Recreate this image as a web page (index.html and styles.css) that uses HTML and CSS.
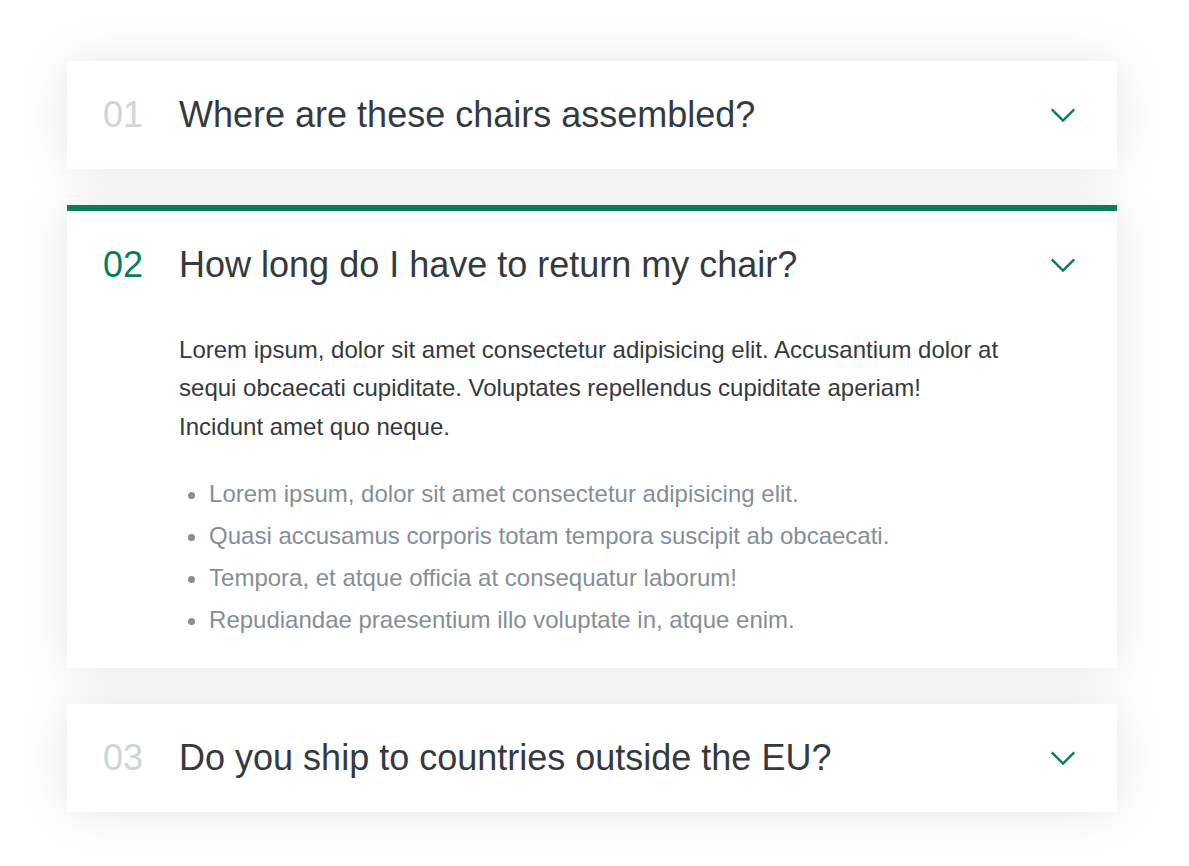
FILE: index.html
```html
<!DOCTYPE html>
<html lang="en">
<head>
<meta charset="utf-8">
<title>Accordion</title>
<link rel="stylesheet" href="styles.css">
</head>
<body>
<div class="accordion">
  <div class="item">
    <p class="number">01</p>
    <p class="title">Where are these chairs assembled?</p>
    <svg class="icon" viewBox="0 0 24 24" fill="none" stroke="currentColor" stroke-width="1.6"><path d="M19.5 8.25l-7.5 7.5-7.5-7.5"/></svg>
  </div>
  <div class="item open">
    <p class="number">02</p>
    <p class="title">How long do I have to return my chair?</p>
    <svg class="icon" viewBox="0 0 24 24" fill="none" stroke="currentColor" stroke-width="1.6"><path d="M19.5 8.25l-7.5 7.5-7.5-7.5"/></svg>
    <div class="content">
      <p>Lorem ipsum, dolor sit amet consectetur adipisicing elit. Accusantium dolor at sequi obcaecati cupiditate. Voluptates repellendus cupiditate aperiam! Incidunt amet quo neque.</p>
      <ul>
        <li>Lorem ipsum, dolor sit amet consectetur adipisicing elit.</li>
        <li>Quasi accusamus corporis totam tempora suscipit ab obcaecati.</li>
        <li>Tempora, et atque officia at consequatur laborum!</li>
        <li>Repudiandae praesentium illo voluptate in, atque enim.</li>
      </ul>
    </div>
  </div>
  <div class="item">
    <p class="number">03</p>
    <p class="title">Do you ship to countries outside the EU?</p>
    <svg class="icon" viewBox="0 0 24 24" fill="none" stroke="currentColor" stroke-width="1.6"><path d="M19.5 8.25l-7.5 7.5-7.5-7.5"/></svg>
  </div>
</div>
</body>
</html>
```
FILE: styles.css
```css
* { margin: 0; padding: 0; box-sizing: border-box; }
html, body {
  min-height: 100%;
}
body {
  font-family: "Liberation Sans", Arial, sans-serif;
  color: #343a40;
  line-height: 1;
  background: #fff;
  padding: 61px 0 54px 67px;
}
.accordion {
  width: 1050px;
  display: flex;
  flex-direction: column;
  gap: 36px;
}
.item {
  background: #fff;
  box-shadow: 0 0 48px rgba(0, 0, 0, 0.1);
  padding: 36px;
  display: grid;
  grid-template-columns: auto 1fr auto;
  column-gap: 36px;
  row-gap: 48px;
  align-items: center;
}
.open {
  border-top: 6px solid #087f5b;
}
.number, .title {
  font-size: 36px;
  font-weight: 500;
}
.number { color: #ced4da; }
.open .number { color: #087f5b; }
.icon {
  width: 36px;
  height: 36px;
  color: #087f5b;
}
.content {
  grid-column: 2;
}
.content p {
  font-size: 24px;
  line-height: 1.6;
  margin-bottom: 36px;
}
.content ul {
  color: #868e96;
  padding-left: 30px;
  display: flex;
  flex-direction: column;
  gap: 18px;
  font-size: 24px;
}
```
